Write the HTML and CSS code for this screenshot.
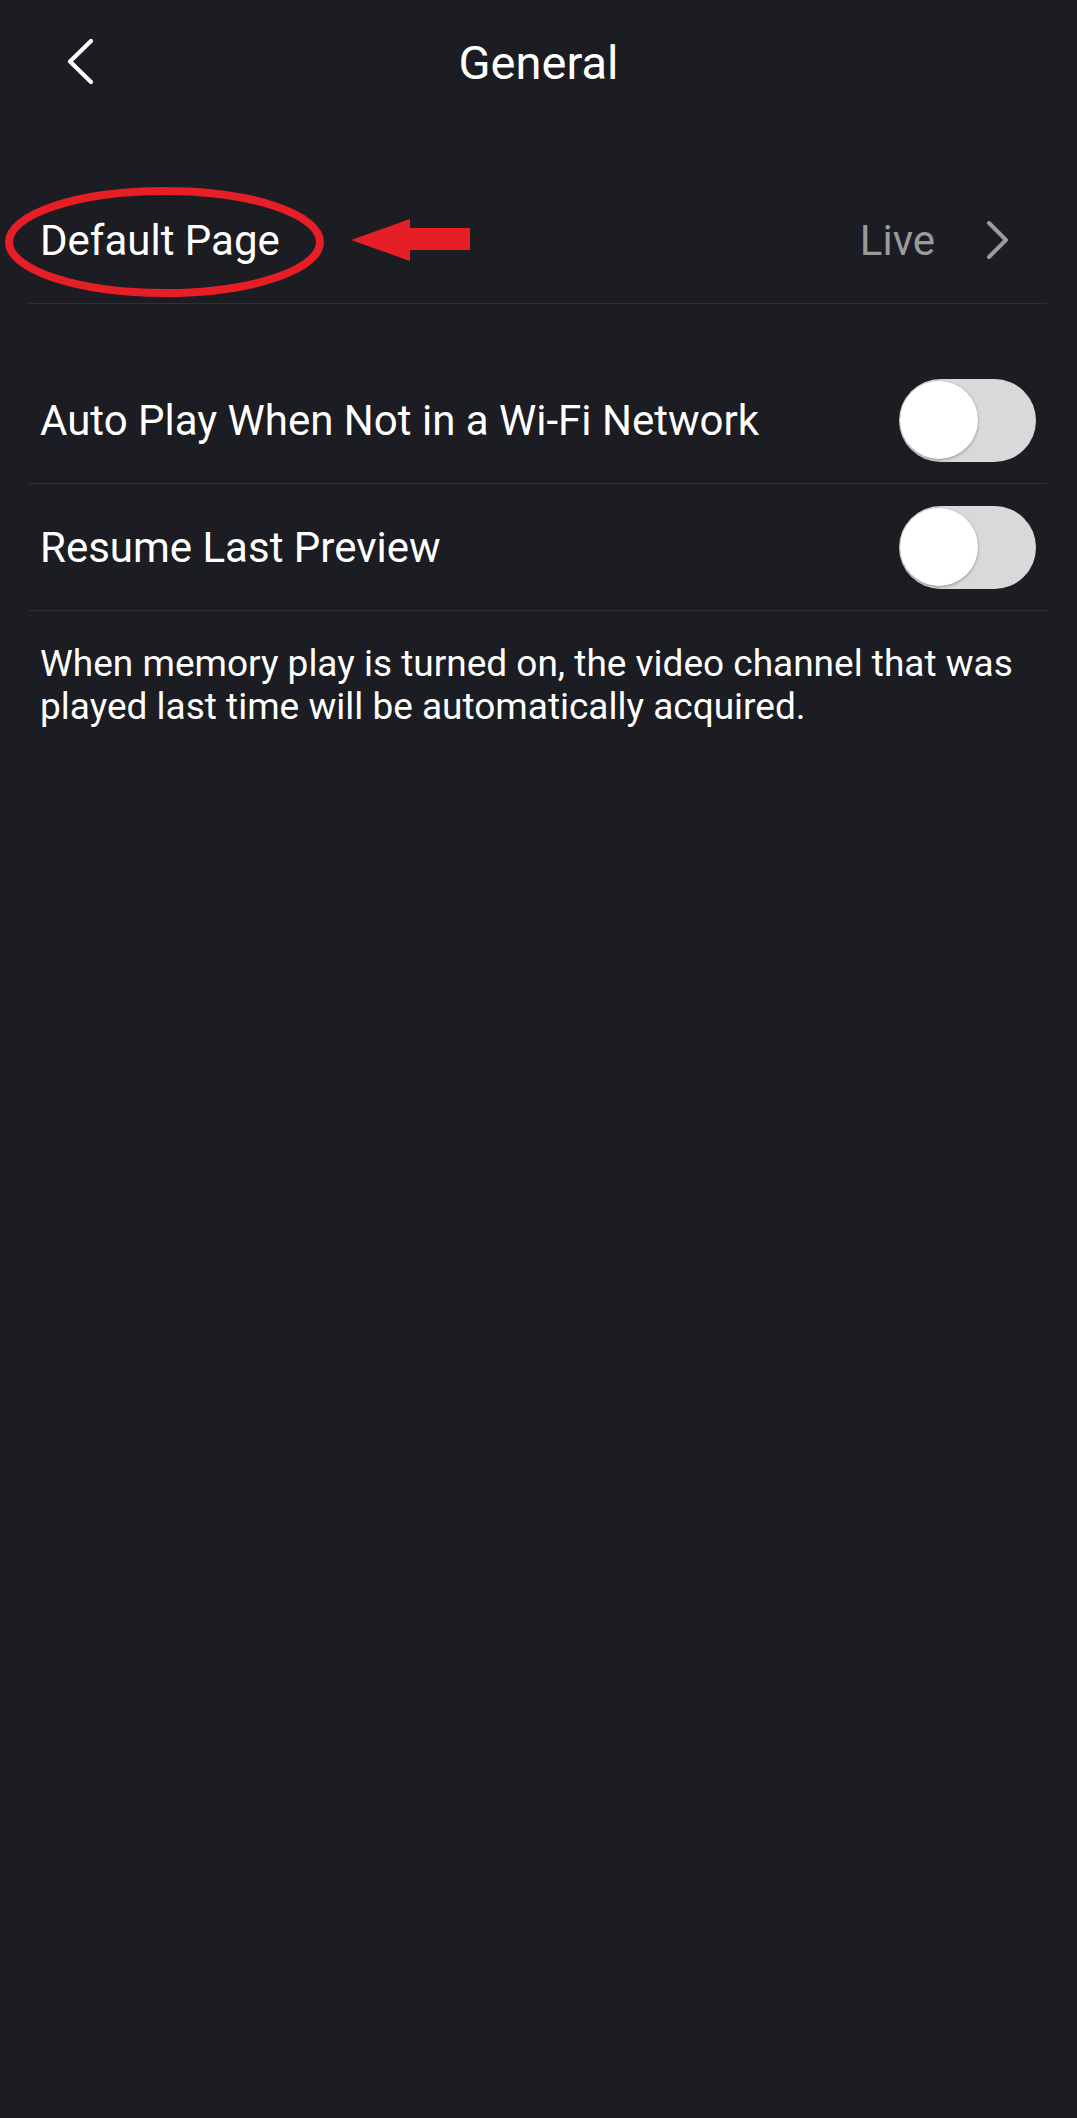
FILE: index.html
```html
<!DOCTYPE html>
<html lang="en">
<head>
  <meta charset="UTF-8">
  <meta name="viewport" content="width=device-width, initial-scale=1.0">
  <title>General</title>
  <link rel="stylesheet" href="styles.css">
</head>
<body>
  <div class="header">
    <div class="back-cell">
      <svg class="back-icon" width="32" height="46" viewBox="0 0 32 46">
        <polyline points="25,2 4,22.5 25,43" fill="none" stroke="#fff" stroke-width="4.2" stroke-linecap="round" stroke-linejoin="round"/>
      </svg>
    </div>
    <div class="title">General</div>
    <div></div>
  </div>

  <div class="group">
    <div class="row">
      <span class="label">Default Page</span>
      <span class="value">Live</span>
      <svg class="chevron" width="24" height="40" viewBox="0 0 24 40">
        <polyline points="3,3 20,20 3,37" fill="none" stroke="#9b9b9b" stroke-width="4" stroke-linecap="round" stroke-linejoin="round"/>
      </svg>
      <!-- red annotation drawn over the screenshot -->
      <svg class="mark" width="467" height="112" viewBox="0 0 467 112">
        <ellipse cx="159.5" cy="55" rx="155.5" ry="51" fill="none" stroke="#e61e25" stroke-width="8"/>
        <polygon points="346,53 405,32 405,41 465,41 465,63 405,63 405,74" fill="#e61e25"/>
      </svg>
    </div>
  </div>

  <div class="group">
    <div class="row">
      <span class="label">Auto Play When Not in a Wi-Fi Network</span>
      <div class="toggle"><div class="knob"></div></div>
    </div>
    <div class="row">
      <span class="label">Resume Last Preview</span>
      <div class="toggle"><div class="knob"></div></div>
    </div>
  </div>

  <p class="note">When memory play is turned on, the video channel that was played last time will be automatically acquired.</p>
</body>
</html>
```

FILE: styles.css
```css
body {
  margin: 0;
  min-height: 100vh;
  background-color: #1b1d22;
  color: #fff;
  font-family: Roboto, "Noto Sans", sans-serif;
}

.header {
  display: grid;
  grid-template-columns: 1fr auto 1fr;
  align-items: center;
  height: 124px;
}

.back-cell {
  display: flex;
  align-items: center;
}

.back-icon {
  margin-left: 66px;
  overflow: visible;
}

.title {
  font-size: 47px;
}

.group {
  margin: 53px 30px 0 29px;
}

.row {
  position: relative;
  display: flex;
  align-items: center;
  height: 126px;
  padding: 0 11px 0 11px;
  border-bottom: 1px solid #2e3138;
  font-size: 42px;
}

.label {
  flex: 1;
}

.value {
  color: #9b9b9b;
  margin-right: 51px;
}

.chevron {
  margin-right: 26px;
  overflow: visible;
}

.mark {
  position: absolute;
  left: -24px;
  top: 10px;
  pointer-events: none;
}

.toggle {
  position: relative;
  width: 137px;
  height: 83px;
  border-radius: 42px;
  background-color: #d9d9d9;
}

.knob {
  position: absolute;
  left: 1px;
  top: 2.5px;
  width: 78px;
  height: 78px;
  border-radius: 50%;
  background-color: #fff;
  box-shadow: 0 1px 3px rgba(0, 0, 0, 0.35);
}

.note {
  margin: 0;
  padding: 31px 30px 0 40px;
  font-size: 37px;
  line-height: 43px;
}
```
